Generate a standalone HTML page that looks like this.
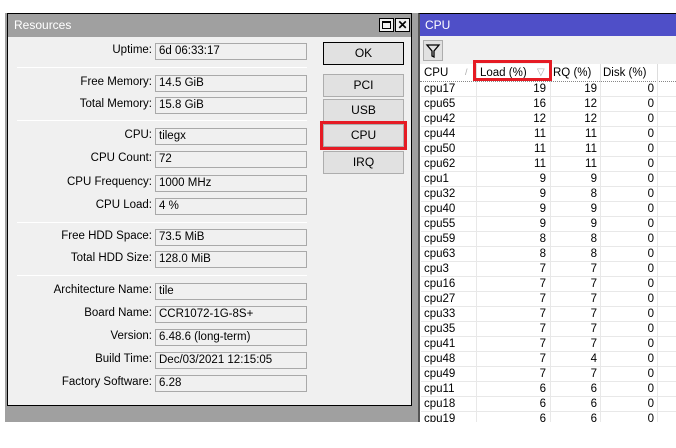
<!DOCTYPE html>
<html><head><style>
*{margin:0;padding:0;box-sizing:border-box}
body{width:676px;height:448px;background:#fff;position:relative;overflow:hidden;font-family:"Liberation Sans",sans-serif;font-size:11.5px;color:#000}
.a{position:absolute}
.lbl{position:absolute;right:524px;text-align:right;white-space:nowrap}
.fld{position:absolute;left:155px;width:152px;height:17px;border:1px solid #a9a9a9;background:#f0f0f0;padding:1px 3px;white-space:nowrap}
.sep{position:absolute;left:17px;width:290px;height:1px;background:#a0a0a0;border-bottom:1px solid #fff}
.btn{position:absolute;left:323px;width:81px;height:23px;border:1px solid #adadad;background:#e1e1e1;text-align:center;line-height:21px;font-size:12px}
.row{position:absolute;left:421px;width:255px;height:15px;border-bottom:1px solid #e8e8e8}
.row span{position:absolute;top:0;line-height:14px}
.c1{left:3px}.c2{right:130px}.c3{right:79px}.c4{right:22px}
</style></head><body>
<div class="a" style="left:5px;top:13px;width:413px;height:409px;background:#a0a0a0"></div>
<div class="a" style="left:7px;top:13px;width:405px;height:393px;border:1px solid #000;background:#f0f0f0"></div>
<div class="a" style="left:8px;top:14px;width:403px;height:23px;background:#a0a0a0;color:#fff;font-size:12px;line-height:23px;padding-left:6px">Resources</div>
<div class="a" style="left:379px;top:18px;width:15px;height:14px;border:1px solid #000;background:#f0f0f0"><div style="margin:2px;width:9px;height:8px;border:1px solid #000;border-top-width:2px"></div></div>
<div class="a" style="left:395px;top:18px;width:15px;height:14px;border:1px solid #000;background:#f0f0f0;font-size:12px;font-weight:bold;line-height:12px;text-align:center">✕</div>

<div class="lbl" style="top:44px">Uptime:</div><div class="fld" style="top:43px">6d 06:33:17</div>
<div class="sep" style="top:67px"></div>
<div class="lbl" style="top:76px">Free Memory:</div><div class="fld" style="top:75px">14.5 GiB</div>
<div class="lbl" style="top:98px">Total Memory:</div><div class="fld" style="top:97px">15.8 GiB</div>
<div class="sep" style="top:120px"></div>
<div class="lbl" style="top:129px">CPU:</div><div class="fld" style="top:128px">tilegx</div>
<div class="lbl" style="top:152px">CPU Count:</div><div class="fld" style="top:151px">72</div>
<div class="lbl" style="top:176px">CPU Frequency:</div><div class="fld" style="top:175px">1000 MHz</div>
<div class="lbl" style="top:199px">CPU Load:</div><div class="fld" style="top:198px">4 %</div>
<div class="sep" style="top:222px"></div>
<div class="lbl" style="top:230px">Free HDD Space:</div><div class="fld" style="top:229px">73.5 MiB</div>
<div class="lbl" style="top:252px">Total HDD Size:</div><div class="fld" style="top:251px">128.0 MiB</div>
<div class="sep" style="top:275px"></div>
<div class="lbl" style="top:284px">Architecture Name:</div><div class="fld" style="top:283px">tile</div>
<div class="lbl" style="top:307px">Board Name:</div><div class="fld" style="top:306px">CCR1072-1G-8S+</div>
<div class="lbl" style="top:330px">Version:</div><div class="fld" style="top:329px">6.48.6 (long-term)</div>
<div class="lbl" style="top:353px">Build Time:</div><div class="fld" style="top:352px">Dec/03/2021 12:15:05</div>
<div class="lbl" style="top:376px">Factory Software:</div><div class="fld" style="top:375px">6.28</div>

<div class="btn" style="top:42px;border:1px solid #000">OK</div>
<div class="btn" style="top:74px">PCI</div>
<div class="btn" style="top:99px">USB</div>
<div class="btn" style="top:124px">CPU</div>
<div class="a" style="left:320px;top:121px;width:87px;height:29px;border:3px solid #e51b24"></div>
<div class="btn" style="top:151px">IRQ</div>

<div class="a" style="left:418px;top:13px;width:258px;height:409px;background:#fff;border-left:2px solid #555;border-top:1px solid #000"></div>
<div class="a" style="left:420px;top:14px;width:256px;height:22px;background:#4f4fc8;color:#fff;font-size:12px;line-height:22px;padding-left:5px">CPU</div>
<div class="a" style="left:420px;top:36px;width:256px;height:28px;background:#f0f0f0"></div>
<div class="a" style="left:423px;top:40px;width:20px;height:21px;border:1px solid #adadad;background:#e1e1e1">
<svg width="18" height="19" viewBox="0 0 18 19"><path d="M3 4H15L10 10V16L8 15V10Z" fill="none" stroke="#000" stroke-width="1.3"/></svg></div>
<div class="a" style="left:420px;top:64px;width:256px;height:18px;background:#fff;border-bottom:1px dotted #888"></div>
<div class="a" style="left:424px;top:67px">CPU</div>
<div class="a" style="left:465px;top:67px;color:#aaa;font-size:9px">/</div>
<div class="a" style="left:476px;top:64px;width:1px;height:18px;background:#ddd"></div>
<div class="a" style="left:480px;top:67px">Load (%)</div>
<div class="a" style="left:537px;top:67px;color:#aaa;font-size:10px">▽</div>
<div class="a" style="left:550px;top:64px;width:1px;height:18px;background:#ddd"></div>
<div class="a" style="left:553px;top:67px">RQ (%)</div>
<div class="a" style="left:600px;top:64px;width:1px;height:18px;background:#ddd"></div>
<div class="a" style="left:603px;top:67px">Disk (%)</div>
<div class="a" style="left:657px;top:64px;width:1px;height:18px;background:#ddd"></div>
<div class="a" style="left:473px;top:60px;width:79px;height:21px;border:3px solid #e51b24"></div>
<div class="a" style="left:476px;top:82px;width:1px;height:340px;background:#e8e8e8"></div>
<div class="a" style="left:550px;top:82px;width:1px;height:340px;background:#e8e8e8"></div>
<div class="a" style="left:600px;top:82px;width:1px;height:340px;background:#e8e8e8"></div>
<div class="a" style="left:657px;top:82px;width:1px;height:340px;background:#e8e8e8"></div>
<div class="row" style="top:82px"><span class="c1">cpu17</span><span class="c2">19</span><span class="c3">19</span><span class="c4">0</span></div>
<div class="row" style="top:97px"><span class="c1">cpu65</span><span class="c2">16</span><span class="c3">12</span><span class="c4">0</span></div>
<div class="row" style="top:112px"><span class="c1">cpu42</span><span class="c2">12</span><span class="c3">12</span><span class="c4">0</span></div>
<div class="row" style="top:127px"><span class="c1">cpu44</span><span class="c2">11</span><span class="c3">11</span><span class="c4">0</span></div>
<div class="row" style="top:142px"><span class="c1">cpu50</span><span class="c2">11</span><span class="c3">11</span><span class="c4">0</span></div>
<div class="row" style="top:157px"><span class="c1">cpu62</span><span class="c2">11</span><span class="c3">11</span><span class="c4">0</span></div>
<div class="row" style="top:172px"><span class="c1">cpu1</span><span class="c2">9</span><span class="c3">9</span><span class="c4">0</span></div>
<div class="row" style="top:187px"><span class="c1">cpu32</span><span class="c2">9</span><span class="c3">8</span><span class="c4">0</span></div>
<div class="row" style="top:202px"><span class="c1">cpu40</span><span class="c2">9</span><span class="c3">9</span><span class="c4">0</span></div>
<div class="row" style="top:217px"><span class="c1">cpu55</span><span class="c2">9</span><span class="c3">9</span><span class="c4">0</span></div>
<div class="row" style="top:232px"><span class="c1">cpu59</span><span class="c2">8</span><span class="c3">8</span><span class="c4">0</span></div>
<div class="row" style="top:247px"><span class="c1">cpu63</span><span class="c2">8</span><span class="c3">8</span><span class="c4">0</span></div>
<div class="row" style="top:262px"><span class="c1">cpu3</span><span class="c2">7</span><span class="c3">7</span><span class="c4">0</span></div>
<div class="row" style="top:277px"><span class="c1">cpu16</span><span class="c2">7</span><span class="c3">7</span><span class="c4">0</span></div>
<div class="row" style="top:292px"><span class="c1">cpu27</span><span class="c2">7</span><span class="c3">7</span><span class="c4">0</span></div>
<div class="row" style="top:307px"><span class="c1">cpu33</span><span class="c2">7</span><span class="c3">7</span><span class="c4">0</span></div>
<div class="row" style="top:322px"><span class="c1">cpu35</span><span class="c2">7</span><span class="c3">7</span><span class="c4">0</span></div>
<div class="row" style="top:337px"><span class="c1">cpu41</span><span class="c2">7</span><span class="c3">7</span><span class="c4">0</span></div>
<div class="row" style="top:352px"><span class="c1">cpu48</span><span class="c2">7</span><span class="c3">4</span><span class="c4">0</span></div>
<div class="row" style="top:367px"><span class="c1">cpu49</span><span class="c2">7</span><span class="c3">7</span><span class="c4">0</span></div>
<div class="row" style="top:382px"><span class="c1">cpu11</span><span class="c2">6</span><span class="c3">6</span><span class="c4">0</span></div>
<div class="row" style="top:397px"><span class="c1">cpu18</span><span class="c2">6</span><span class="c3">6</span><span class="c4">0</span></div>
<div class="a" style="left:421px;top:412px;width:255px;height:10px;overflow:hidden"><div class="row" style="left:0;top:0"><span class="c1">cpu19</span><span class="c2">6</span><span class="c3">6</span><span class="c4">0</span></div></div>
</body></html>
